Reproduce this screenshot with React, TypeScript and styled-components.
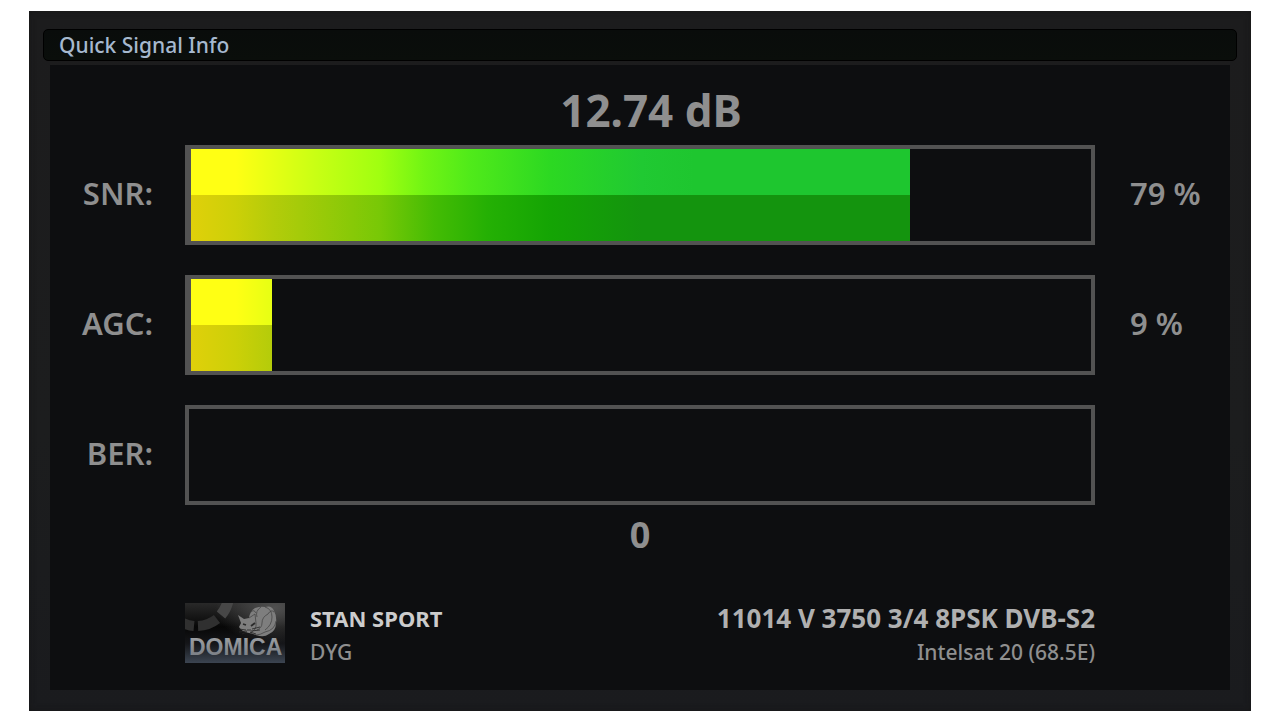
import React from "react";
import styled, { createGlobalStyle } from "styled-components";

const GlobalStyle = createGlobalStyle`
  * { box-sizing: border-box; }
  body {
    margin: 0;
    background: #ffffff;
    font-family: "Noto Sans", "Open Sans", sans-serif;
    font-weight: 500;
    color: #8f8f8f;
  }
  h1, p { margin: 0; font-weight: inherit; }
`;

const Screen = styled.main`
  display: flex;
  flex-direction: column;
  margin: 11px 29px 9px;
  padding: 18px 14px 21px;
  min-height: calc(100vh - 20px);
  background: linear-gradient(#1c1c1d, #1c1d1e 60%, #1a1b1e);
  box-shadow: inset 0 0 6px #161617;
`;

const TitleBar = styled.header`
  height: 32px;
  padding: 0 15px;
  border: 1px solid #000000;
  border-radius: 5px;
  background: linear-gradient(#090c0b, #0a0e0b);
`;

const Title = styled.h1`
  font-size: 21px;
  line-height: 30px;
  color: #a6b9cf;
`;

const Panel = styled.section`
  flex: 1;
  margin: 4px 7px 0;
  padding: 16px 0 20px;
  background: #0d0e10;
`;

const Columns = styled.div`
  display: grid;
  grid-template-columns: 135px minmax(0, 1fr) 135px;
  align-items: center;
  row-gap: 30px;
`;

const Reading = styled.output<{ $large?: boolean }>`
  display: block;
  text-align: center;
  font-weight: 700;
  font-size: ${(p) => (p.$large ? 44 : 36)}px;
  line-height: ${(p) => (p.$large ? 58 : 60)}px;
  padding: ${(p) => (p.$large ? "0 0 6px 22px" : "0")};
`;

const Label = styled.span`
  padding: 0 32px 4px 0;
  text-align: right;
  font-size: 31px;
  line-height: 40px;
  font-weight: 600;
`;

const Percent = styled.span`
  padding: 0 0 4px 35px;
  font-size: 31px;
  line-height: 40px;
  font-weight: 600;
`;

const Track = styled.div`
  height: 100px;
  border: 4px solid #525252;
`;

const Fill = styled.div`
  height: 100%;
  margin-left: 2px;
  box-shadow: -2px 0 #525252;
  background:
    linear-gradient(90deg, #ffff14 5%, #c8ff14 14%, #a0ff10 21%, #70f414 26%, #50ea1a 31%, #2cd822 40%, #20c932 50%, #1ec62f 56%)
      top / 100% 50% no-repeat,
    linear-gradient(90deg, #e0d00a, #ccd008 5%, #b4cc0a 9%, #78c806 21%, #44bc04 27%, #24b004 33%, #14a404 40%, #14940e 50%)
      bottom / 100% 50% no-repeat;
`;

const Footer = styled.footer`
  display: flex;
  align-items: flex-start;
  gap: 25px;
  margin: 35px 135px 0;
`;

const Lines = styled.div<{ $end?: boolean }>`
  margin-left: ${(p) => (p.$end ? "auto" : 0)};
  text-align: ${(p) => (p.$end ? "right" : "left")};
`;

const Primary = styled.p<{ $size: number; $color: string }>`
  font-size: ${(p) => p.$size}px;
  line-height: 36px;
  font-weight: 700;
  color: ${(p) => p.$color};
`;

const Secondary = styled.p`
  font-size: 21px;
  line-height: 32px;
`;

const Picon = styled.svg`
  display: block;
  flex: none;
  width: 100px;
  height: 60px;
  margin-top: 3px;
`;

function Meter({ name, value, fill, text }: { name: string; value: number; fill: number; text: string }) {
  return (
    <>
      <Label id={name}>{name}:</Label>
      <Track role="meter" aria-labelledby={name} aria-valuemin={0} aria-valuemax={100} aria-valuenow={value}>
        {fill > 0 && <Fill style={{ clipPath: `inset(0 ${100 - fill}% 0 -2px)` }} />}
      </Track>
      <Percent>{text}</Percent>
    </>
  );
}

function DomicaLogo() {
  return (
    <Picon viewBox="0 0 100 60" role="img" aria-label="Domica">
      <defs>
        <linearGradient id="base" x1="0" y1="0" x2="0" y2="1">
          <stop offset="0" stopColor="#292929" />
          <stop offset=".4" stopColor="#070707" />
          <stop offset=".68" stopColor="#151619" />
          <stop offset="1" stopColor="#3c4552" />
        </linearGradient>
        <radialGradient id="glow" cx=".9" cy=".08" r=".6">
          <stop offset="0" stopColor="#505050" />
          <stop offset="1" stopColor="#505050" stopOpacity="0" />
        </radialGradient>
        <linearGradient id="word" x1="0" y1="0" x2="0" y2="1">
          <stop offset="0" stopColor="#a2a5a8" />
          <stop offset="1" stopColor="#73787f" />
        </linearGradient>
      </defs>
      <rect width="100" height="60" fill="url(#base)" />
      <rect width="100" height="60" fill="url(#glow)" />
      <path d="M43 -2A33 33 0 0 1 36 12" fill="none" stroke="#474747" strokeWidth="11" />
      <path d="M32 16A33 33 0 0 1 13 23M9 23A33 33 0 0 1 -2 20" fill="none" stroke="#303030" strokeWidth="10" />
      <path d="M53 12L59 16L64 15Q65 8 70 5Q76 3 80 4Q87 2 89 8Q92 13 91 20Q91 28 84 31Q79 35 71 32Q66 30 64 30Q57 29 54 24L56 20Z" fill="#7e7e7e" />
      <path d="M64 15L70 11L71 20Q72 27 65 30M66 9Q69 6 71 10M76 4Q70 8 72 14M80 4Q87 6 87 14Q87 22 80 27M89 9Q86 6 83 11Q77 14 77 20Q77 25 72 27M91 18Q90 27 80 29Q75 32 71 32" fill="none" stroke="#464646" strokeWidth=".8" />
      <path d="M58 21L61 22M66 23L70 20" fill="none" stroke="#2a2a2a" strokeWidth="1.8" />
      <path d="M62 27H66M54 26L61 27M54 29L62 28M57 31L62 29M67 26L75 24M66 28L75 27M65 29L71 31" fill="none" stroke="#242424" strokeWidth=".8" />
      <text x="4" y="52" fontFamily="Liberation Sans, sans-serif" fontWeight="700" fontSize="23" fill="url(#word)">DOMICA</text>
    </Picon>
  );
}

export default function App() {
  return (
    <>
      <GlobalStyle />
      <Screen>
        <TitleBar>
          <Title>Quick Signal Info</Title>
        </TitleBar>
        <Panel>
          <Reading $large>12.74 dB</Reading>
          <Columns>
            <Meter name="SNR" value={79} fill={79.9} text="79 %" />
            <Meter name="AGC" value={9} fill={9} text="9 %" />
            <Meter name="BER" value={0} fill={0} text="" />
          </Columns>
          <Reading>0</Reading>
          <Footer>
            <DomicaLogo />
            <Lines>
              <Primary $size={22} $color="#cccccc">STAN SPORT</Primary>
              <Secondary>DYG</Secondary>
            </Lines>
            <Lines $end>
              <Primary $size={26} $color="#b0b0b0">11014 V 3750 3/4 8PSK DVB-S2</Primary>
              <Secondary>Intelsat 20 (68.5E)</Secondary>
            </Lines>
          </Footer>
        </Panel>
      </Screen>
    </>
  );
}
